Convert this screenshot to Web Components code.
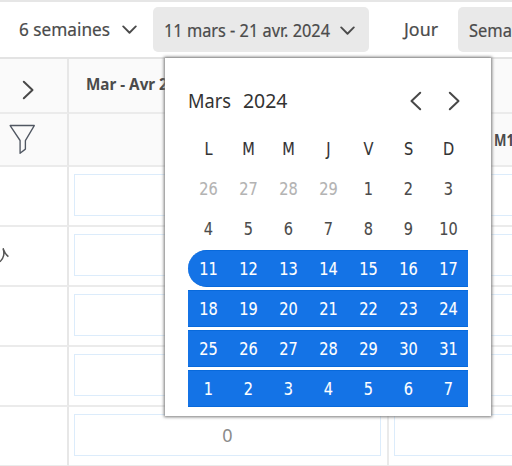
<!DOCTYPE html>
<html lang="fr"><head><meta charset="utf-8"><title>Planning</title>
<style>html,body{margin:0;width:512px;height:466px;overflow:hidden;background:#fff}</style></head>
<body><planning-view></planning-view>
<script>
const define = (name, html, setup) => customElements.define(name, class extends HTMLElement {
  connectedCallback() {
    const root = this.attachShadow({mode: 'open'});
    const t = document.createElement('template');
    t.innerHTML = typeof html === 'function' ? html(this) : html;
    root.append(t.content.cloneNode(true));
    if (setup) setup(this, root);
  }
});

// A label condensed or stretched horizontally to the width in its "w" attribute.
define('fit-text', '<style>:host{display:block;white-space:nowrap;line-height:20px;height:20px;flex:none}span{display:inline-block;transform-origin:0 50%}</style><span><slot></slot></span>', (el, root) => {
  const w = +el.getAttribute('w'), s = root.querySelector('span');
  el.style.width = w + 'px';
  s.style.transform = 'scaleX(' + w / s.getBoundingClientRect().width + ')';
});

const shapes = {
  down: [16, 10, '<path d="M1.3 1.5 8 8.2 14.7 1.5"/>'],
  right: [13, 20, '<path d="M1.8 1.8 10.5 10 1.8 18.2"/>'],
  left: [13, 20, '<path d="M11.2 1.8 2.5 10 11.2 18.2"/>'],
  filter: [28, 30, '<path stroke-width="1.4" d="M1.2 1.5H26.2L17 16v8.3L11.5 28.3V16Z"/>']
};
define('line-icon', el => {
  const [w, h, p] = shapes[el.getAttribute('name')];
  return `<style>:host{display:block;flex:none}svg{display:block;width:100%;height:100%}</style><svg viewBox="0 0 ${w} ${h}" preserveAspectRatio="none" fill="none" stroke="currentColor" stroke-width="2" stroke-linecap="round" stroke-linejoin="round">${p}</svg>`;
});

define('tool-bar', `<style>
:host{display:flex;box-sizing:border-box;height:59px;padding:5px 0 0 19px;border-top:2px solid #e6e6e6;border-bottom:2px solid #e3e3e3;font:18px "Noto Sans",sans-serif;color:#4b4b4b;-webkit-text-stroke:.2px;align-items:flex-start}
.plain{padding-top:12px;display:flex}
.button{box-sizing:border-box;background:#e9e9e9;border-radius:5px;height:45px;display:flex;padding:13px 0 0 11px;flex:none}
.period{margin-left:15.5px;width:216.5px}
.rule{width:2px;height:34px;margin:6px 0 0 11.5px;background:#e6e6e6}
line-icon{width:15px;height:9.5px;margin:6px 0 0 12px}
.period line-icon{margin-left:10px}
.jour{margin-left:23.5px}.week{margin-left:20px;width:90px}
</style>
<div class="plain"><fit-text w="91">6 semaines</fit-text><line-icon name="down"></line-icon></div>
<div class="button period"><fit-text w="166">11 mars - 21 avr. 2024</fit-text><line-icon name="down"></line-icon></div>
<div class="rule"></div><div class="plain jour"><fit-text w="34">Jour</fit-text></div>
<div class="button week"><fit-text w="43">Sema</fit-text></div>`);

define('plan-cell', `<style>:host{box-sizing:border-box;display:block;padding:7px 6px 9px 5px;border-right:2px solid #eaeaea;border-bottom:2px solid #ebebeb}
div{height:100%;box-sizing:border-box;border:1.5px solid #dcecfb;display:grid;place-items:center;font:18px "Noto Sans",sans-serif;color:#8b8b8b}</style><div><slot></slot></div>`);

define('plan-grid', `<style>
:host{display:grid;grid-template-columns:69px 320px 320px;grid-template-rows:55px 53px repeat(5,60px);font:700 16px "Noto Sans",sans-serif;color:#4b4b4b}
.h,.side{box-sizing:border-box;border-right:2px solid #e7e7e7;border-bottom:2px solid #ebebeb;overflow:hidden}
.h{background:#fafafa}
.expand{padding:21px 0 0 22px}.expand line-icon{width:13px;height:20px;color:#484848}
.filter{padding:10px 0 0 9px;color:#505762}.filter line-icon{width:27px;height:31px}
.month{padding:15px 0 0 17px}.week{padding:16px 0 0 105px}
.side{padding-top:20px}
.side svg{display:block}
</style>
<div class="h expand"><line-icon name="right"></line-icon></div><div class="h month"><fit-text w="108">Mar - Avr 2024</fit-text></div><div class="h"></div>
<div class="h filter"><line-icon name="filter"></line-icon></div><div class="h"></div><div class="h week"><fit-text w="20">M1</fit-text></div>
<div class="side"></div><plan-cell></plan-cell><plan-cell></plan-cell>
<div class="side"><svg width="12" height="18" viewBox="0 0 12 18" fill="none" stroke="#555" stroke-width="1.5"><path d="M3 1.5C4.8 6 3.8 11.5 0 14.7M3 1.5C4.2 5 5.6 7.4 8.4 9.7"/></svg></div><plan-cell></plan-cell><plan-cell></plan-cell>
<div class="side"></div><plan-cell></plan-cell><plan-cell></plan-cell>
<div class="side"></div><plan-cell></plan-cell><plan-cell></plan-cell>
<div class="side"></div><plan-cell>0</plan-cell><plan-cell></plan-cell>`);

define('week-row', el => {
  const days = el.getAttribute('days').split(' '), muted = +el.getAttribute('muted') || 0;
  return `<style>:host{display:grid;grid-template-columns:repeat(7,40px);box-sizing:border-box;height:37px;margin-bottom:3px;color:#4b4b4b;align-items:center}
:host([selected]){background:#1473e6;color:#fff;border-top:1px solid #0869db;border-bottom:1px solid #0869db}
:host([start]){border-radius:19px 0 0 19px}:host([heading]){color:#333}
span{text-align:center;transform:translate(.5px,0) scaleX(.95);line-height:22px;-webkit-text-stroke:.1px}.muted{color:#b3b3b3}</style>` +
    days.map((d, i) => `<span class="${i < muted ? 'muted' : ''}">${d}</span>`).join('');
});

define('date-picker', `<style>
:host{display:block;box-sizing:border-box;width:326px;height:358px;background:#fff;padding:32px 23px 0;box-shadow:0 0 3px 1px #777;font:17px "DejaVu Sans Condensed","DejaVu Sans",sans-serif;font-stretch:condensed}
header{display:flex;height:40px;font:19px "Noto Sans",sans-serif;color:#333}
fit-text{margin-top:1px}
.year{margin-left:12px}line-icon{width:13px;height:20px;margin-top:1px;color:#484848}
.prev{margin-left:121px}.next{margin-left:26px}
</style>
<header><fit-text w="43">Mars</fit-text><fit-text class="year" w="44.5">2024</fit-text><line-icon class="prev" name="left"></line-icon><line-icon class="next" name="right"></line-icon></header>
<week-row heading days="L M M J V S D"></week-row>
<week-row days="26 27 28 29 1 2 3" muted="4"></week-row>
<week-row days="4 5 6 7 8 9 10"></week-row>
<week-row selected start days="11 12 13 14 15 16 17"></week-row>
<week-row selected days="18 19 20 21 22 23 24"></week-row>
<week-row selected days="25 26 27 28 29 30 31"></week-row>
<week-row selected days="1 2 3 4 5 6 7"></week-row>`);

define('planning-view', `<style>:host{display:block;position:relative;width:512px;height:466px;overflow:hidden}
date-picker{position:absolute;left:165px;top:58px}</style>
<tool-bar></tool-bar><plan-grid></plan-grid><date-picker></date-picker>`);
</script></body></html>
